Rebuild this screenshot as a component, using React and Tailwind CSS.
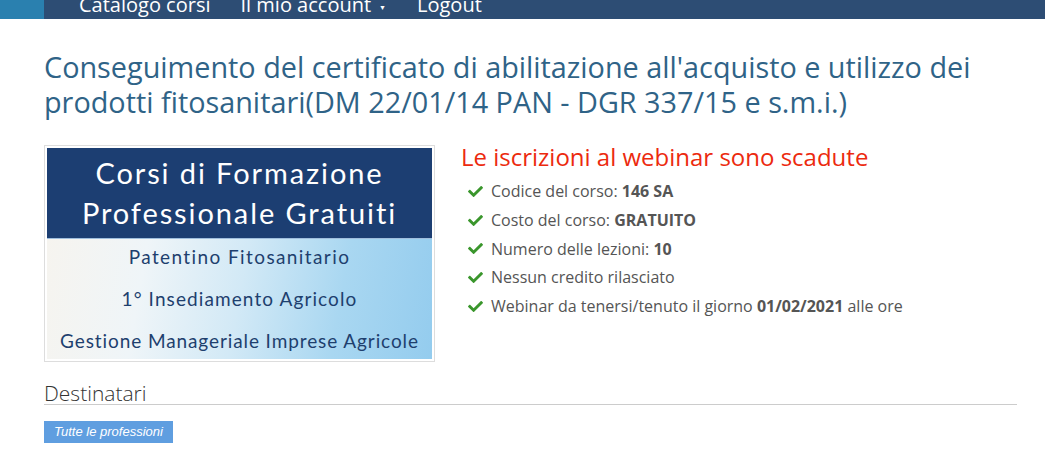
import React from "react";
import { FaCheck } from "react-icons/fa";

const items = [
  <>Codice del corso: <b>146 SA</b></>,
  <>Costo del corso: <b>GRATUITO</b></>,
  <>Numero delle lezioni: <b>10</b></>,
  <>Nessun credito rilasciato</>,
  <>Webinar da tenersi/tenuto il giorno <b>01/02/2021</b> alle ore</>,
];

export default function App() {
  return (
    <div className="w-[1045px] h-[468px] bg-white overflow-hidden" style={{ fontFamily: '"Open Sans", sans-serif' }}>
      {/* navbar */}
      <div className="flex h-[19px] overflow-hidden bg-[#2d4d74]">
        <div className="w-[44px] bg-[#2a80af]" />
        <div className="flex text-white text-[20px] leading-[20px] mt-[-5px] whitespace-nowrap">
          <span className="ml-[35px]">Catalogo corsi</span>
          <span className="ml-[30px] flex items-start">Il mio account<span className="text-[7px] leading-[7px] ml-[8px] mt-[9px]">▼</span></span>
          <span className="ml-[31px]">Logout</span>
        </div>
      </div>

      <div className="pl-[44px] pr-[28px]">
        <h1 className="text-[#2f6387] text-[28.8px] leading-[35px] mt-[30px]">
          Conseguimento del certificato di abilitazione all'acquisto e utilizzo dei
          <br />
          prodotti fitosanitari(DM 22/01/14 PAN - DGR 337/15 e s.m.i.)
        </h1>

        <div className="flex mt-[26px]">
          <div className="w-[391px] h-[217px] border border-[#dddddd] p-[2px] shrink-0">
            <div className="w-full h-full flex flex-col" style={{ fontFamily: 'Lato, sans-serif' }}>
              <div className="h-[90px] bg-[#1c3e72] flex flex-col items-center justify-center text-white text-[29px] leading-[40px] tracking-[1.9px]">
                <div>Corsi di Formazione</div>
                <div>Professionale Gratuiti</div>
              </div>
              <div className="h-px bg-[#9fbedd]" />
              <div className="flex-1 flex flex-col items-center text-[#1e3f6e] text-[19px] bg-[linear-gradient(100deg,#f6f4ef_0%,#eff5f8_25%,#d2e9f6_50%,#a9d7f1_75%,#94ccee_100%)] pt-[6px] leading-[24px] gap-[18px]">
                <div className="tracking-[1.4px]">Patentino Fitosanitario</div>
                <div className="tracking-[1.1px]">1° Insediamento Agricolo</div>
                <div className="tracking-[0.9px]">Gestione Manageriale Imprese Agricole</div>
              </div>
            </div>
          </div>

          <div className="ml-[26px]">
            <div className="text-[#ec2a0e] text-[24px] leading-[30px] mt-[-3px] whitespace-nowrap">Le iscrizioni al webinar sono scadute</div>
            <ul className="mt-[5px] ml-[6px] text-[#555555] text-[16px]">
              {items.map((it, i) => (
                <li key={i} className="flex items-center h-[28.7px] whitespace-nowrap">
                  <FaCheck className="text-[#3a962c] w-[17px] h-[15px] mr-[7px] shrink-0" />
                  <span>{it}</span>
                </li>
              ))}
            </ul>
          </div>
        </div>

        <div className="mt-[20px] text-[#333333] text-[21px] leading-[22px] font-light">Destinatari</div>
        <div className="h-px bg-[#cccccc] w-[973px]" />
        <div className="mt-[13px] h-[22px]">
          <span className="inline-block bg-[#5f9ee0] text-white italic text-[13px] leading-[22px] px-[10px] h-[22px]" style={{ fontFamily: '"Liberation Sans", Arial, sans-serif' }}>
            Tutte le professioni
          </span>
        </div>
      </div>
    </div>
  );
}
